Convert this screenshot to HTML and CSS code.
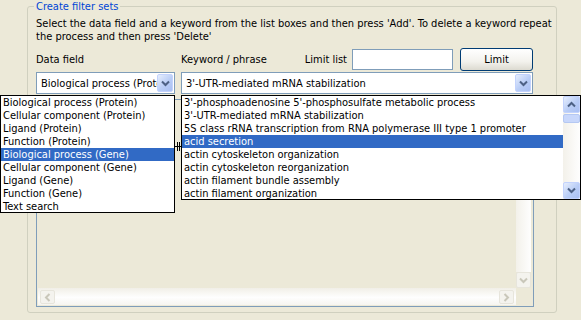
FILE: index.html
```html
<!DOCTYPE html>
<html lang="en">
<head>
    <meta charset="UTF-8">
    <title>Create filter sets</title>
    <link rel="stylesheet" href="styles.css">
</head>
<body>
    <div class="panel">
        <fieldset class="filter-sets">
            <legend>Create filter sets</legend>
            <p class="intro">Select the data field and a keyword from the list boxes and then press 'Add'. To delete a keyword repeat<br>the process and then press 'Delete'</p>

            <div class="field-row">
                <span class="lbl lbl-data">Data field</span>
                <span class="lbl lbl-kw">Keyword / phrase</span>
                <span class="lbl lbl-limit">Limit list</span>
                <input class="limit-input" type="text">
                <button class="xp-btn">Limit</button>
            </div>

            <div class="combo-row">
                <div class="combo combo-data">
                    <span class="combo-text">Biological process (Prote</span>
                    <span class="arrow-btn"><svg width="9" height="7" viewBox="0 0 9 7"><polyline points="1,1.5 4.5,5 8,1.5" /></svg></span>
                </div>
                <div class="combo combo-kw">
                    <span class="combo-text">3'-UTR-mediated mRNA stabilization</span>
                    <span class="arrow-btn"><svg width="9" height="7" viewBox="0 0 9 7"><polyline points="1,1.5 4.5,5 8,1.5" /></svg></span>
                </div>
            </div>

            <div class="grid">
                <div class="grid-body"></div>
                <div class="vscroll">
                    <div class="vtrack"></div>
                    <span class="dis-btn"><svg width="9" height="7" viewBox="0 0 9 7"><polyline points="1,1.5 4.5,5 8,1.5" /></svg></span>
                </div>
                <div class="hscroll">
                    <span class="dis-btn"><svg width="7" height="9" viewBox="0 0 7 9"><polyline points="5.5,1 2,4.5 5.5,8" /></svg></span>
                    <div class="htrack"></div>
                    <span class="dis-btn"><svg width="7" height="9" viewBox="0 0 7 9"><polyline points="1.5,1 5,4.5 1.5,8" /></svg></span>
                </div>
                <div class="corner"></div>
            </div>
        </fieldset>

        <!-- open dropdown of the data field combo -->
        <ul class="drop drop-data">
            <li>Biological process (Protein)</li>
            <li>Cellular component (Protein)</li>
            <li>Ligand (Protein)</li>
            <li>Function (Protein)</li>
            <li class="sel">Biological process (Gene)</li>
            <li>Cellular component (Gene)</li>
            <li>Ligand (Gene)</li>
            <li>Function (Gene)</li>
            <li>Text search</li>
        </ul>

        <!-- open dropdown of the keyword combo -->
        <div class="drop drop-kw">
            <ul class="kw-items">
                <li>3'-phosphoadenosine 5'-phosphosulfate metabolic process</li>
                <li>3'-UTR-mediated mRNA stabilization</li>
                <li>5S class rRNA transcription from RNA polymerase III type 1 promoter</li>
                <li class="sel">acid secretion</li>
                <li>actin cytoskeleton organization</li>
                <li>actin cytoskeleton reorganization</li>
                <li>actin filament bundle assembly</li>
                <li>actin filament organization</li>
            </ul>
            <div class="kw-scroll">
                <span class="arrow-btn"><svg width="9" height="7" viewBox="0 0 9 7"><polyline points="1,5.5 4.5,2 8,5.5" /></svg></span>
                <span class="thumb"></span>
                <span class="kw-track"></span>
                <span class="arrow-btn"><svg width="9" height="7" viewBox="0 0 9 7"><polyline points="1,1.5 4.5,5 8,1.5" /></svg></span>
            </div>
        </div>

        <svg class="split-cursor" width="7" height="9" viewBox="0 0 7 9">
            <path d="M2.5 0v9M4.5 0v9M0 4.5h7" />
        </svg>
    </div>
</body>
</html>
```

FILE: styles.css
```css
body {
    margin: 0;
    background-color: #ece9d8;
    font-family: "DejaVu Sans Condensed", "Liberation Sans", sans-serif;
    font-size: 11px;
    color: #000;
}
.panel {
    position: relative;
    width: 581px;
    height: 320px;
    overflow: hidden;
}
.filter-sets {
    margin: 0 0 0 27px;
    width: 512px;
    height: 313px;
    box-sizing: border-box;
    border: 1px solid #d0d0bf;
    border-radius: 3px;
    padding: 0 4px 5px 8px;
    display: flex;
    flex-direction: column;
}
.filter-sets legend {
    color: #0046d5;
    line-height: 13px;
    padding: 0 2px;
    margin-left: -2px;
}
.intro {
    margin: 4px 0 0;
    line-height: 13px;
    white-space: nowrap;
}
.field-row {
    display: flex;
    align-items: center;
    width: 497px;
    height: 23px;
    margin-top: 5px;
    white-space: nowrap;
}
.lbl-data { width: 145px; }
.lbl-kw { flex: 1; }
.lbl-limit { margin-right: 5px; }
.limit-input {
    box-sizing: border-box;
    width: 101px;
    height: 21px;
    border: 1px solid #7f9db9;
    background: #fff;
    margin: 0 7px 0 0;
    padding: 0;
}
.xp-btn {
    box-sizing: border-box;
    width: 73px;
    height: 23px;
    border: 1px solid #003c74;
    border-radius: 3px;
    background: linear-gradient(#fff, #f3f2ed 60%, #dcdad0);
    font: inherit;
    color: #000;
    padding: 0;
}
.combo-row {
    display: flex;
    gap: 6px;
    margin-top: 1px;
}
.combo {
    box-sizing: border-box;
    height: 22px;
    border: 1px solid #7f9db9;
    background: #fff;
    display: flex;
    align-items: center;
    padding: 1px;
}
.combo-data { width: 139px; }
.combo-kw { width: 352px; }
.combo-text {
    flex: 1;
    padding-left: 3px;
    white-space: nowrap;
    overflow: hidden;
}
.arrow-btn {
    box-sizing: border-box;
    width: 16px;
    height: 18px;
    border: 1px solid #c3d3fd;
    border-radius: 2px;
    background: linear-gradient(135deg, #e6eefd, #b9cdf6 55%, #aac0f3);
    display: flex;
    align-items: center;
    justify-content: center;
}
.arrow-btn svg polyline {
    fill: none;
    stroke: #4d6185;
    stroke-width: 2;
}
.grid {
    box-sizing: border-box;
    width: 498px;
    height: 208px;
    margin-top: 5px;
    border: 1px solid #7f9db9;
    padding: 1px 2px 1px 1px;
    display: grid;
    grid-template-columns: 1fr 15px;
    grid-template-rows: 1fr 17px;
}
.vscroll {
    display: flex;
    flex-direction: column;
}
.vtrack {
    flex: 1;
    background: linear-gradient(90deg, #f3f1ea, #fefefe);
}
.vscroll .dis-btn { height: 16px; }
.hscroll {
    display: flex;
    background: linear-gradient(#f1efe7, #fefefe 55%, #f6f5f0);
    padding: 2px 2px 1px;
}
.htrack { flex: 1; }
.dis-btn {
    box-sizing: border-box;
    width: 15px;
    border: 1px solid #e7e5dc;
    border-radius: 2px;
    background: #f4f3ee;
    display: flex;
    align-items: center;
    justify-content: center;
}
.dis-btn svg polyline {
    fill: none;
    stroke: #c9c7ba;
    stroke-width: 2;
}
.drop {
    position: absolute;
    top: 95px;
    box-sizing: border-box;
    margin: 0;
    padding: 0;
    border: 1px solid #000;
    background: #fff;
    list-style: none;
}
.drop li {
    height: 13px;
    line-height: 13px;
    padding-left: 2px;
    white-space: nowrap;
}
.drop li.sel {
    background: #316ac5;
    color: #fff;
}
.drop-data {
    left: 0;
    width: 175px;
    height: 118px;
}
.drop-kw {
    left: 181px;
    width: 400px;
    height: 105px;
    display: flex;
}
.kw-items {
    flex: 1;
    margin: 0;
    padding: 0;
    list-style: none;
    overflow: hidden;
}
.kw-scroll {
    width: 17px;
    display: flex;
    flex-direction: column;
    background: linear-gradient(90deg, #f3f1ea, #fefefe);
}
.kw-scroll .arrow-btn {
    width: 17px;
    height: 17px;
}
.thumb {
    height: 7px;
    margin-top: 1px;
    border: 1px solid #b5c8f2;
    border-radius: 2px;
    background: #c8d7fb;
}
.kw-track { flex: 1; }
.split-cursor {
    position: absolute;
    left: 175px;
    top: 142px;
}
.split-cursor path {
    stroke: #000;
    stroke-width: 1;
    fill: none;
}
```
